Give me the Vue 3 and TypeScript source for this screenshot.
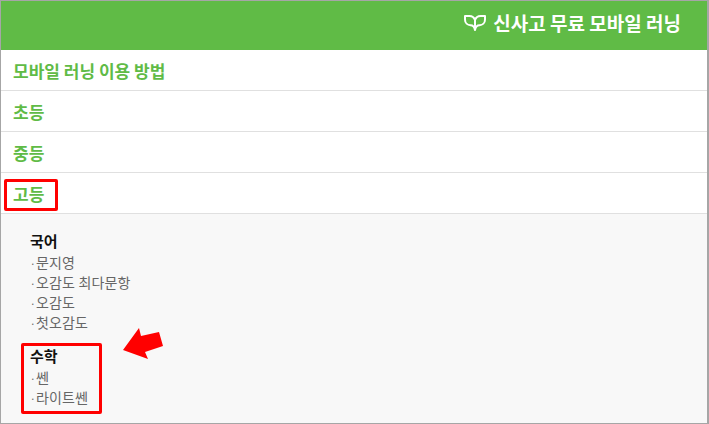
<template>
  <div class="frame">
    <header class="top">
      <svg class="book" viewBox="0 0 22 16" fill="none" stroke="#fff" stroke-width="2" stroke-linejoin="round" aria-hidden="true">
        <path d="M11 5C10 2.300 8 1 5.500 1H1v3.500C1 8 3.500 10.200 6.500 10.200 9 10.200 10.500 12 11 15 11.500 12 13 10.200 15.500 10.200 18.500 10.200 21 8 21 4.500V1H16.500C14 1 12 2.300 11 5Z" />
        <path d="M11 5v10" />
      </svg>
      <span>신사고 무료 모바일 러닝</span>
    </header>

    <div v-for="row in rows" :key="row" class="row">{{ row }}</div>

    <section class="panel">
      <div v-for="group in groups" :key="group.title" class="group">
        <h3>{{ group.title }}</h3>
        <p v-for="item in group.items" :key="item"><i>·</i>{{ item }}</p>
      </div>
    </section>

    <div class="mark mark-row"></div>
    <div class="mark mark-group"></div>
    <svg class="arrow" viewBox="0 0 42 32" aria-hidden="true">
      <path d="M0 22 16 0l2 8 18-4 4 14-18 6 3 7Z" fill="#ff0000" />
    </svg>
  </div>
</template>

<script setup lang="ts">
const rows: string[] = ['모바일 러닝 이용 방법', '초등', '중등', '고등']

const groups: { title: string; items: string[] }[] = [
  { title: '국어', items: ['문지영', '오감도 최다문항', '오감도', '첫오감도'] },
  { title: '수학', items: ['쎈', '라이트쎈'] }
]
</script>

<style>
html,
body {
  margin: 0;
  background: #fff;
}
</style>

<style scoped>
.frame {
  position: relative;
  width: 709px;
  height: 424px;
  box-sizing: border-box;
  border: 1px solid #a6a6a6;
  border-right-width: 2px;
  overflow: hidden;
  font-family: 'Noto Sans CJK KR', 'Noto Sans', sans-serif;
}

.top {
  height: 49px;
  box-sizing: border-box;
  background: #60bb46;
  color: #fff;
  display: flex;
  align-items: center;
  justify-content: flex-end;
  gap: 7px;
  padding: 0 26px 5px 0;
  font-size: 19px;
  line-height: 26px;
  font-weight: 700;
}

.book {
  width: 22px;
  height: 16px;
}

.row {
  height: 40px;
  border-bottom: 1px solid #e0e0e0;
  padding-left: 12px;
  display: flex;
  align-items: center;
  color: #60bb46;
  font-size: 17px;
  font-weight: 700;
}

.panel {
  height: 209px;
  background: #f8f8f8;
  padding: 17px 0 0 29px;
  box-sizing: border-box;
}

.group {
  margin-bottom: 14px;
}

h3 {
  margin: 0 0 1px;
  font-size: 15px;
  line-height: 20px;
  font-weight: 700;
  color: #111;
}

p {
  display: flex;
  align-items: baseline;
  height: 20px;
  margin: 0;
  font-size: 14px;
  line-height: 20px;
  letter-spacing: 0.15px;
  color: #666;
}

i {
  width: 6px;
  flex: none;
  font-style: normal;
  font-size: 10px;
  letter-spacing: 0;
}

.mark {
  position: absolute;
  box-sizing: border-box;
  border: 3px solid #ff0000;
  border-radius: 2px;
}

.mark-row {
  left: 3px;
  top: 178px;
  width: 54px;
  height: 32px;
}

.mark-group {
  left: 20px;
  top: 342px;
  width: 81px;
  height: 71px;
}

.arrow {
  position: absolute;
  left: 122px;
  top: 327px;
  width: 42px;
  height: 32px;
}
</style>
